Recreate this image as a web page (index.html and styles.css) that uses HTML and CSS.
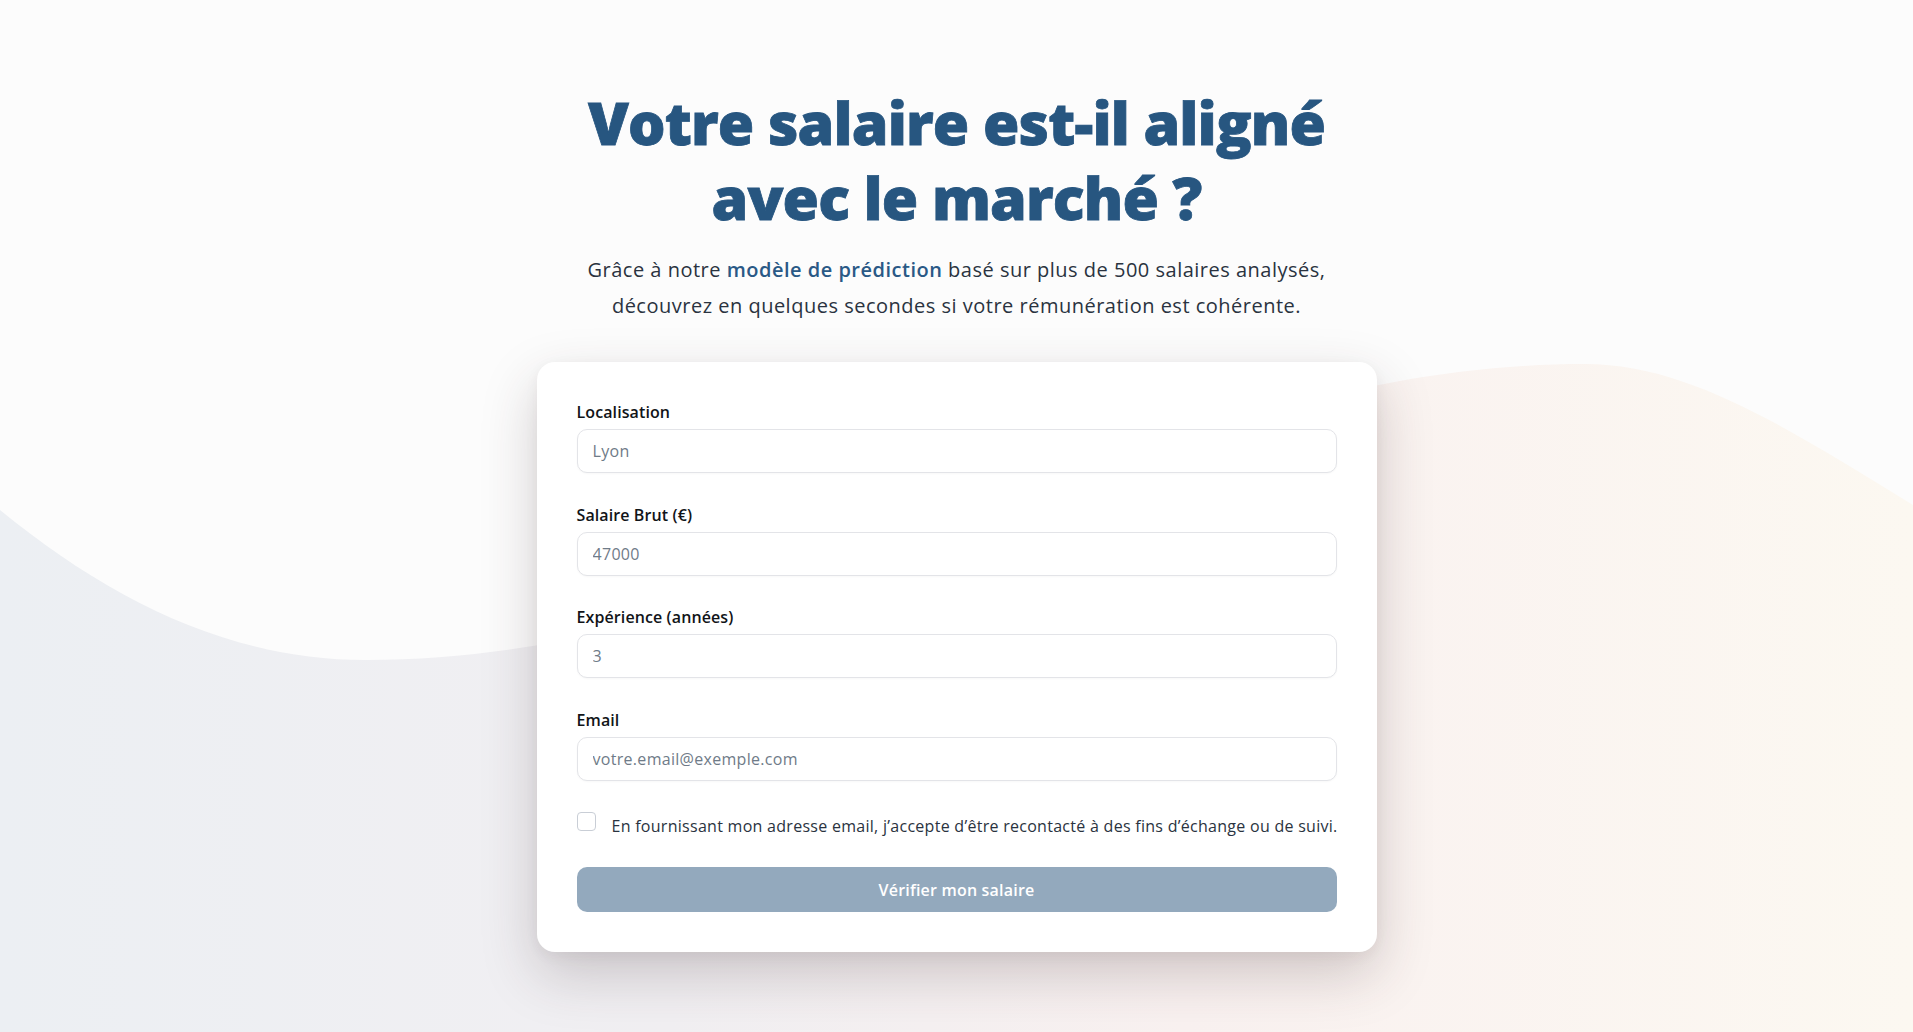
FILE: index.html
```html
<!DOCTYPE html>
<html lang="fr">
<head>
<meta charset="utf-8">
<title>Votre salaire est-il aligné avec le marché ?</title>
<link rel="stylesheet" href="styles.css">
</head>
<body>
<div class="bg">
  <svg class="wave" viewBox="0 0 1913 1032" preserveAspectRatio="none" aria-hidden="true">
    <path d="M0,0 H1913 V505 C1790,430 1690,364 1585,364 C1150,364 800,660 366,660 C230,660 110,600 0,510 Z" fill="#fcfcfc"/>
  </svg>
</div>
<main class="page">
  <header class="hero">
    <h1 class="title">Votre salaire est-il aligné<br>avec le marché ?</h1>
    <p class="lead">Grâce à notre <strong class="accent">modèle de prédiction</strong> basé sur plus de 500 salaires analysés,<br>découvrez en quelques secondes si votre rémunération est cohérente.</p>
  </header>
  <form class="card">
    <div class="field">
      <label class="label" for="loc">Localisation</label>
      <input class="input" id="loc" type="text" placeholder="Lyon">
    </div>
    <div class="field">
      <label class="label" for="sal">Salaire Brut (€)</label>
      <input class="input" id="sal" type="text" placeholder="47000">
    </div>
    <div class="field">
      <label class="label" for="exp">Expérience (années)</label>
      <input class="input" id="exp" type="text" placeholder="3">
    </div>
    <div class="field">
      <label class="label" for="mail">Email</label>
      <input class="input" id="mail" type="text" placeholder="votre.email@exemple.com">
    </div>
    <label class="consent">
      <input class="check" type="checkbox">
      <span class="consent-text">En fournissant mon adresse email, j’accepte d’être recontacté à des fins d’échange ou de suivi.</span>
    </label>
    <button class="submit" type="button">Vérifier mon salaire</button>
  </form>
</main>
</body>
</html>
```

FILE: styles.css
```css
* { box-sizing: border-box; }

html, body {
  margin: 0;
  padding: 0;
  height: 100%;
}

body {
  font-family: "Open Sans", "Noto Sans", "Lato", sans-serif;
  background: linear-gradient(90deg, #eceff3 0%, #f1eff2 35%, #f9f1f0 62%, #fcf8f1 100%);
  overflow: hidden;
  position: relative;
}

.bg {
  position: absolute;
  inset: 0;
  z-index: 0;
}

.wave {
  width: 100%;
  height: 100%;
  display: block;
}

.page {
  position: relative;
  z-index: 1;
  display: flex;
  flex-direction: column;
  align-items: center;
  padding-top: 85px;
}

.hero {
  text-align: center;
}

.title {
  margin: 0;
  font-size: 59px;
  line-height: 75px;
  font-weight: 800;
  letter-spacing: -0.85px;
  color: #275680;
  -webkit-text-stroke: 0.8px #275680;
}

.lead {
  margin: 17px 0 0;
  font-size: 20px;
  line-height: 35.5px;
  letter-spacing: 0.5px;
  color: #2a3340;
}

.accent {
  font-weight: 600;
  color: #2a5986;
}

.card {
  margin-top: 39px;
  width: 840px;
  padding: 40px;
  background: #ffffff;
  border-radius: 18px;
  box-shadow: 0 22px 55px rgba(60, 40, 45, 0.22), 0 4px 14px rgba(60, 40, 45, 0.05);
  display: flex;
  flex-direction: column;
}

.field {
  display: flex;
  flex-direction: column;
  margin-bottom: 31.5px;
}

.label {
  font-size: 16px;
  line-height: 20px;
  font-weight: 600;
  letter-spacing: 0.1px;
  color: #111418;
  margin-bottom: 7px;
}

.input {
  height: 44px;
  width: 100%;
  border: 1px solid #e3e4e8;
  border-radius: 10px;
  padding: 0 15px;
  font-family: inherit;
  font-size: 16px;
  letter-spacing: 0.3px;
  color: #2d3642;
  background: #ffffff;
  box-shadow: 0 1px 2px rgba(0, 0, 0, 0.03);
}

.input::placeholder {
  color: #6f7b88;
}

.consent {
  display: flex;
  align-items: flex-start;
  gap: 16px;
  margin-bottom: 29px;
}

.check {
  appearance: none;
  -webkit-appearance: none;
  margin: 0;
  flex: 0 0 19px;
  width: 19px;
  height: 19px;
  border: 1px solid #c9ced6;
  border-radius: 4px;
  background: #ffffff;
}

.consent-text {
  font-size: 16px;
  line-height: 24px;
  letter-spacing: 0.28px;
  padding-top: 2px;
  white-space: nowrap;
  color: #2a3340;
}

.submit {
  height: 45px;
  width: 100%;
  border: none;
  border-radius: 10px;
  background: #93a9bd;
  color: #ffffff;
  font-family: inherit;
  font-size: 16px;
  font-weight: 600;
  letter-spacing: 0.2px;
}
```
